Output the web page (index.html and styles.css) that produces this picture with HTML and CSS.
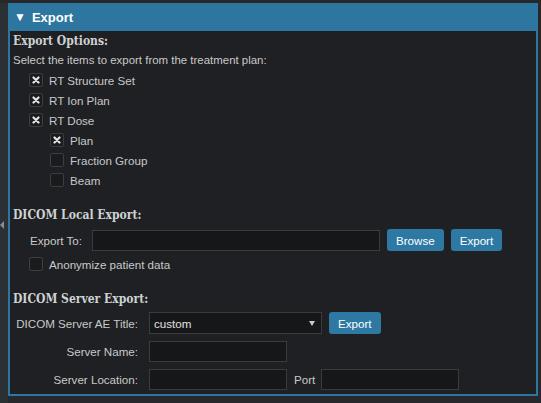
FILE: index.html
```html
<!DOCTYPE html>
<html>
<head>
<meta charset="utf-8">
<link rel="stylesheet" href="styles.css">
</head>
<body>
<div class="page">
  <div class="side"><span class="side-arrow"></span></div>
  <div class="panel">
    <div class="panel-head"><span class="caret">▼</span><span>Export</span></div>
    <div class="panel-body">
      <div class="title">Export Options:</div>
      <div class="text-line">Select the items to export from the treatment plan:</div>
      <div class="check-row lvl1"><span class="cb on"><svg viewBox="0 0 8 8"><path d="M1.5 1.5 L6.5 6.5 M6.5 1.5 L1.5 6.5"/></svg></span><span>RT Structure Set</span></div>
      <div class="check-row lvl1"><span class="cb on"><svg viewBox="0 0 8 8"><path d="M1.5 1.5 L6.5 6.5 M6.5 1.5 L1.5 6.5"/></svg></span><span>RT Ion Plan</span></div>
      <div class="check-row lvl1"><span class="cb on"><svg viewBox="0 0 8 8"><path d="M1.5 1.5 L6.5 6.5 M6.5 1.5 L1.5 6.5"/></svg></span><span>RT Dose</span></div>
      <div class="check-row lvl2"><span class="cb on"><svg viewBox="0 0 8 8"><path d="M1.5 1.5 L6.5 6.5 M6.5 1.5 L1.5 6.5"/></svg></span><span>Plan</span></div>
      <div class="check-row lvl2"><span class="cb"></span><span>Fraction Group</span></div>
      <div class="check-row lvl2"><span class="cb"></span><span>Beam</span></div>

      <div class="title sec2">DICOM Local Export:</div>
      <div class="field-row local">
        <span class="lbl-local">Export To:</span>
        <span class="input wide"></span>
        <button class="btn">Browse</button>
        <button class="btn">Export</button>
      </div>
      <div class="check-row lvl1 anon"><span class="cb"></span><span>Anonymize patient data</span></div>

      <div class="title sec3">DICOM Server Export:</div>
      <div class="field-row srv first">
        <span class="lbl-srv">DICOM Server AE Title:</span>
        <span class="input select"><span>custom</span><span class="sel-arrow"></span></span>
        <button class="btn">Export</button>
      </div>
      <div class="field-row srv">
        <span class="lbl-srv">Server Name:</span>
        <span class="input short"></span>
      </div>
      <div class="field-row srv">
        <span class="lbl-srv">Server Location:</span>
        <span class="input short"></span>
        <span class="lbl-port">Port</span>
        <span class="input short"></span>
      </div>
    </div>
  </div>
</div>
</body>
</html>
```

FILE: styles.css
```css
html, body {
  margin: 0;
  padding: 0;
  background: #26282c;
  width: 541px;
  height: 403px;
  overflow: hidden;
  font-family: "Liberation Sans", Arial, sans-serif;
  font-size: 11.6px;
  color: #c9c9c9;
}

.page {
  display: flex;
  padding-top: 3px;
  height: 400px;
}

.side {
  width: 8px;
  flex-shrink: 0;
  background: #2b3035;
  display: flex;
  align-items: flex-start;
  padding-top: 218px;
  box-sizing: border-box;
}

.side-arrow {
  width: 0;
  height: 0;
  border-top: 4px solid transparent;
  border-bottom: 4px solid transparent;
  border-right: 4px solid #8a8d90;
}

.panel {
  width: 530px;
  flex-shrink: 0;
  display: flex;
  flex-direction: column;
}

.panel-head {
  height: 28px;
  background: #2d76a0;
  color: #ffffff;
  font-weight: bold;
  font-size: 13px;
  display: flex;
  align-items: center;
  padding-left: 6px;
  gap: 6px;
}

.caret {
  font-size: 12px;
}

.panel-body {
  background: #1f2023;
  border: 2px solid #2d76a0;
  border-top: 0;
  padding: 0 0 4px 3px;
  display: flex;
  flex-direction: column;
}

.title {
  font-family: "DejaVu Serif Condensed", "DejaVu Serif", Georgia, serif;
  font-stretch: condensed;
  font-weight: bold;
  font-size: 12px;
  color: #cfd2d4;
  height: 20px;
  line-height: 20px;
}

.text-line {
  height: 19px;
  line-height: 19px;
  font-size: 11.45px;
}

.check-row {
  height: 20px;
  display: flex;
  align-items: center;
  gap: 6px;
  white-space: nowrap;
}

.lvl1 { padding-left: 16px; }
.lvl2 { padding-left: 37px; }

.cb {
  width: 14px;
  height: 14px;
  flex-shrink: 0;
  box-sizing: border-box;
  background: #1a1b1d;
  border: 1px solid #3b3d41;
  border-radius: 2px;
  display: flex;
  align-items: center;
  justify-content: center;
}

.cb svg {
  width: 8px;
  height: 8px;
}

.cb svg path {
  stroke: #e6e6e6;
  stroke-width: 2.2;
  stroke-linecap: round;
  fill: none;
}

.sec2 { margin-top: 15px; }
.sec3 { margin-top: 15px; }

.field-row {
  display: flex;
  align-items: center;
  white-space: nowrap;
}

.field-row > * {
  flex-shrink: 0;
}

.local {
  margin-top: 4px;
  height: 22px;
}

.lbl-local {
  padding-left: 17px;
  width: 79px;
  box-sizing: border-box;
}

.input {
  height: 21px;
  box-sizing: border-box;
  background: #161719;
  border: 1px solid #3a3b3e;
  display: flex;
  align-items: center;
}

.wide { width: 288px; }

.btn {
  font-family: "Liberation Sans", Arial, sans-serif;
  font-size: 11.6px;
  color: #ffffff;
  background: #2d79a3;
  border: 0;
  border-radius: 3px;
  height: 22px;
  padding: 0 9px;
  margin-left: 7px;
}

.anon { margin-top: 3px; }

.srv {
  margin-top: 6px;
  height: 22px;
}

.srv.first { margin-top: 3px; }

.lbl-srv {
  width: 125px;
  text-align: right;
  margin-right: 11px;
}

.select {
  width: 173px;
  height: 22px;
  padding: 0 6px 0 4px;
  justify-content: space-between;
  color: #e0e0e0;
}

.sel-arrow {
  width: 0;
  height: 0;
  border-left: 3.5px solid transparent;
  border-right: 3.5px solid transparent;
  border-top: 5px solid #c8c8c8;
}

.short { width: 138px; }

.lbl-port {
  margin: 0 6px 0 7px;
}
```
